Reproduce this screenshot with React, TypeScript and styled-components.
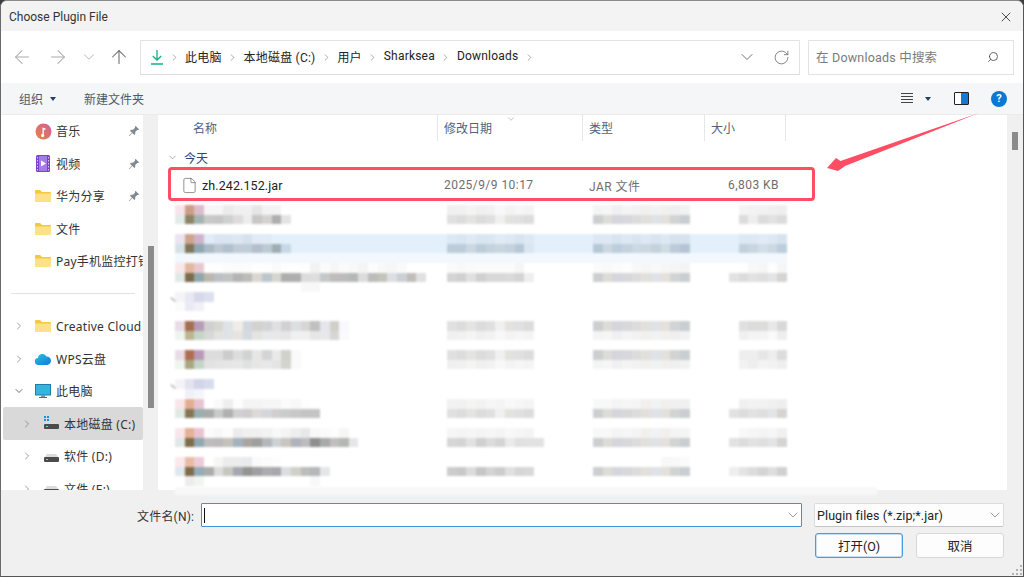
import React from "react";
import styled, { createGlobalStyle } from "styled-components";
import { ArrowLeft, ArrowRight, ArrowUp, ChevronDown, ChevronRight, RotateCw, Search, X, File as FileIcon } from "lucide-react";

const Global = createGlobalStyle`
  html, body { margin: 0; padding: 0; background: #3c3c3c; }
  * { box-sizing: border-box; }
  body { font-family: Roboto, "Noto Sans CJK SC", sans-serif; font-size: 12px; color: #222; }
`;

const Win = styled.div`
  position: relative; width: 1024px; height: 577px; overflow: hidden; display: flex; flex-direction: column;
  background: #fff; border-top: 1px solid #8a8a8a; border-left: 1px solid #6a6a6a; border-right: 1px solid #555;
  border-bottom: 1px solid #555; border-radius: 7px 7px 0 0;
`;
const TitleBar = styled.div`
  height: 30px; flex: none; background: #f3f3f3; display: flex; align-items: center; justify-content: space-between;
  padding: 1px 9px 0 8px; font-size: 12px; color: #333;
`;
const NavBar = styled.div`
  height: 52px; flex: none; background: #fff; display: flex; align-items: center; padding-top: 0;
`;
const NavIcons = styled.div`
  width: 139px; flex: none; position: relative; height: 100%; display: flex; align-items: center;
`;
const NavBtn = styled.span<{ $w: number; $c?: string }>`
  width: ${p => p.$w}px; flex: none; display: flex; justify-content: center; color: ${p => p.$c || "#a9a9a9"};
`;
const AddressBox = styled.div`
  width: 660px; height: 35px; flex: none; border: 1px solid #e3e3e3; border-bottom-color: #dcdcdc; display: flex; align-items: center;
  padding: 0 9px 0 10px; font-size: 12px; color: #222;
`;
const Crumb = styled.span`
  white-space: nowrap; padding-bottom: 2px; letter-spacing: .2px;
`;
const CrumbSep = styled.span`
  display: flex; width: 22px; justify-content: center; color: #666;
`;
const CrumbEnd = styled.div`
  margin-left: auto; display: flex; align-items: center; gap: 16px; color: #666;
`;
const SearchBox = styled.div`
  width: 206px; height: 35px; flex: none; margin-left: 8px; border: 1px solid #e3e3e3; display: flex; align-items: center; justify-content: space-between;
  padding: 0 14px 1px 7px; font-size: 12.5px; color: #7a7a7a; letter-spacing: .2px;
`;
const SearchGlyph = styled.span`
  display: flex; transform: scaleX(-1); color: #555;
`;
const Toolbar = styled.div`
  height: 32px; flex: none; background: #f5f6f7; border-bottom: 1px solid #ebebeb; display: flex; align-items: center;
  padding: 0 16px 0 18px; color: #4a5a70; font-size: 12px;
`;
const ToolButton = styled.span`
  display: flex; align-items: center; gap: 7px;
`;
const Caret = styled.span`
  width: 0; height: 0; border-left: 3.5px solid transparent; border-right: 3.5px solid transparent; border-top: 4px solid #24406a;
`;
const NewFolder = styled.span`
  margin-left: 28px;
`;
const ToolRight = styled.div`
  margin-left: auto; display: flex; align-items: center;
`;
const ViewList = styled.span`
  width: 12px; height: 11px; margin-right: 12px; background: repeating-linear-gradient(#444 0 1px, transparent 1px 3px);
`;
const PaneIcon = styled.span`
  width: 15px; height: 13px; margin-left: 23px; border: 1.5px solid #222; border-radius: 1px;
  background: linear-gradient(90deg, #fff 45%, #1479d6 45%);
`;
const Help = styled.span`
  width: 16px; height: 16px; margin-left: 22px; border-radius: 50%; background: #0a78d6; color: #fff; font-size: 11px; font-weight: 700;
  display: flex; align-items: center; justify-content: center;
`;
const Main = styled.div`
  flex: 1; min-height: 0; display: flex; background: #fff;
`;
const Sidebar = styled.div`
  width: 142px; flex: none; overflow: hidden;
`;
const SideRow = styled.div<{ $level: number; $sel?: boolean }>`
  height: 32.5px; display: flex; align-items: center; font-family: "Noto Sans", "Noto Sans CJK SC", sans-serif; font-size: 12px; letter-spacing: .25px; color: #333; white-space: nowrap; overflow: hidden;
  padding-left: ${p => (p.$level ? 18 : 10) - (p.$sel ? 2 : 0)}px; padding-right: 0;
  margin-left: ${p => (p.$sel ? 2 : 0)}px; background: ${p => (p.$sel ? "#d9d9d9" : "transparent")}; border-radius: 2px;
`;
const Expander = styled.span`
  width: 16px; flex: none; margin-right: 5px; display: flex; justify-content: center; color: #777;
`;
const IconSlot = styled.span`
  width: 22px; flex: none; margin-right: 2px; display: flex; justify-content: center; align-items: center;
`;
const SideLabel = styled.span`
  flex: 1; min-width: 0; overflow: hidden; line-height: 17px; padding-top: 1px;
`;
const PinSlot = styled.span`
  display: flex; margin: 0 3px 0 4px;
`;
const SideDivider = styled.div`
  height: 32.25px; display: flex; align-items: center; padding: 0 8px 0 10px;
  &::after { content: ""; flex: 1; height: 1px; background: #e2e2e2; }
`;
const Track = styled.div<{ $top: number; $w: number }>`
  width: ${p => p.$w}px; flex: none; background: #f0f0f0; padding: ${p => p.$top}px 5px 0;
`;
const Thumb = styled.div<{ $h: number }>`
  width: 6px; height: ${p => p.$h}px; background: #8b8b8b;
`;
const Pane = styled.div`
  flex: 1; min-width: 0; margin-left: 2px; position: relative; z-index: 1;
`;
const Head = styled.div`
  display: flex; height: 26px; color: #4f627c; font-size: 12px; position: relative;
`;
const HeadCell = styled.div<{ $w: number; $pad: number }>`
  width: ${p => p.$w}px; padding-left: ${p => p.$pad}px; padding-top: 4px; border-right: 1px solid #e6e6e6;
`;
const SortMark = styled.span`
  position: absolute; left: 346px; top: -1px; color: #888; display: flex;
`;
const GroupRow = styled.div`
  margin-top: 7px; height: 19px; padding-left: 7px; display: flex; align-items: center; gap: 6px; color: #2e4a78; font-size: 12px;
`;
const Grid = styled.div`
  display: grid; grid-template-columns: 263px 145px 122px 82px; margin-left: 15px; width: 612px;
`;
const FileRow = styled(Grid)`
  margin-top: 4px; height: 28px; align-items: center; color: #6e6e6e; font-size: 12px;
`;
const FileName = styled.div`
  display: flex; align-items: center; gap: 4px; padding-left: 6px; color: #222; font-size: 12.5px; letter-spacing: .1px;
`;
const FileCell = styled.div<{ $right?: boolean }>`
  padding: ${p => (p.$right ? "0 8px 0 0" : "0 0 0 6px")}; text-align: ${p => (p.$right ? "right" : "left")}; letter-spacing: .45px;
`;
const BlurList = styled.div`
  margin-top: 6px; filter: blur(.8px);
`;
const BlurRow = styled(Grid)<{ $hl?: boolean; $h?: number }>`
  height: ${p => p.$h || 29}px; align-items: start;
  background: ${p => (p.$hl ? "linear-gradient(#e3f0fb 19px, #f2f8fe 19px)" : "transparent")};
`;
const BlurGroup = styled(BlurRow)`
  position: relative;
  &::before {
    content: ""; position: absolute; left: -5px; top: 7px; width: 6px; height: 1.2px; background: #8a8a8a; transform: rotate(40deg);
  }
`;
const BlurCol = styled.div<{ $ml?: number; $right?: boolean }>`
  margin-left: ${p => p.$ml || 0}px; display: flex; flex-direction: column; align-items: ${p => (p.$right ? "flex-end" : "flex-start")};
`;
const Line = styled.div`
  display: flex; height: 9.67px;
`;
const Cell = styled.span<{ $c: string }>`
  width: 9.67px; height: 9.67px; flex: none; background: #${p => p.$c};
`;
const Strip = styled.div`
  margin-left: 15px; width: 702px; height: 8px; margin-top: 1px; background: #f8f8f8;
`;
const Foot = styled.div`
  height: 86px; flex: none; background: #f0f0f0; padding: 13px 20px 0 136px; display: grid;
  grid-template-columns: 64px 601px 12px 190px; grid-template-rows: 24px 25px; row-gap: 6px; position: relative;
`;
const FootLabel = styled.label`
  display: flex; align-items: center; color: #333; font-size: 12px; letter-spacing: .2px;
`;
const NameInput = styled.div`
  grid-column: 2; border: 1px solid #3d93dc; background: #fff; display: flex; align-items: center; justify-content: space-between;
  padding: 0 0 0 2px; color: #777; border-radius: 1px;
`;
const Cursor = styled.span`
  width: 1px; height: 15px; background: #111;
`;
const TypeSelect = styled.div`
  grid-column: 4; border: 1px solid #dcdcdc; border-bottom-color: #c4c4c4; background: #fdfdfd; border-radius: 2px; display: flex; align-items: center;
  justify-content: space-between; padding: 0 0 0 2px; color: #222; font-size: 12.5px; letter-spacing: .1px; white-space: nowrap;
`;
const Buttons = styled.div`
  grid-column: 2 / 5; display: flex; justify-content: flex-end; gap: 13px;
`;
const Btn = styled.div<{ $primary?: boolean }>`
  width: 88px; height: 25px; border-radius: 3px; background: #fdfdfd; display: flex; align-items: center; justify-content: center; color: #222; font-size: 12.5px;
  border: 1px solid ${p => (p.$primary ? "#4a9bdc" : "#d8d8d8")};
  box-shadow: ${p => (p.$primary ? "inset 0 0 0 .5px #8cc0ea" : "none")};
`;
const Grip = styled.svg`
  position: absolute; right: 1px; bottom: 1px;
`;
const RedBox = styled.div`
  position: absolute; left: 167px; top: 166px; width: 647px; height: 34px; border: 3px solid #ff4d63; border-radius: 4px; z-index: 3;
`;
const Arrow = styled.svg`
  position: absolute; left: 820px; top: 105px; z-index: 3;
`;

const Folder = () => (
  <svg width="16" height="14" viewBox="0 0 16 14">
    <path d="M0 2a1 1 0 0 1 1-1h4l2 2h8a1 1 0 0 1 1 1v9H0z" fill="#f9c63f" />
    <path d="M0 4.5h16V13H0z" fill="#fde08a" />
  </svg>
);
const Music = () => (
  <svg width="17" height="17" viewBox="0 0 17 17">
    <defs><linearGradient id="mg" x1="0" y1="1" x2="1" y2="0"><stop offset="0" stopColor="#e9853f" /><stop offset="1" stopColor="#c9609b" /></linearGradient></defs>
    <circle cx="8.5" cy="8.5" r="8" fill="url(#mg)" />
    <path d="M7.5 11V4.5l3 1v1.4l-1.7-.5V11.5a1.6 1.6 0 1 1-1.3-.5z" fill="#fff" />
  </svg>
);
const Video = () => (
  <svg width="14" height="17" viewBox="0 0 14 17">
    <rect width="14" height="17" rx="1.5" fill="#7d3fd0" />
    <path d="M3 1h8v15H3z" fill="#a77be6" />
    <path d="M5 5.5l5 3-5 3z" fill="#fff" />
    <path d="M1 2h1v1.5H1zM1 5h1v1.5H1zM1 8h1v1.5H1zM1 11h1v1.5H1zM1 14h1v1.5H1zM12 2h1v1.5h-1zM12 5h1v1.5h-1zM12 8h1v1.5h-1zM12 11h1v1.5h-1zM12 14h1v1.5h-1z" fill="#d7c2f5" />
  </svg>
);
const Cloud = () => (
  <svg width="16" height="12" viewBox="0 0 16 12">
    <defs><linearGradient id="cg" x1="0" y1="0" x2="1" y2="1"><stop offset="0" stopColor="#20c6d8" /><stop offset="1" stopColor="#1478e0" /></linearGradient></defs>
    <path d="M3.5 12A3.5 3.5 0 0 1 3 5a4.5 4.5 0 0 1 8.5-1.5A4.2 4.2 0 0 1 12 12z" fill="url(#cg)" />
  </svg>
);
const Monitor = () => (
  <svg width="16" height="15" viewBox="0 0 16 15">
    <rect x=".5" y=".5" width="15" height="10.5" fill="#35b5dc" stroke="#1f7ea6" />
    <path d="M6 11h4v2H6z" fill="#7d97a8" /><path d="M4 13h8v1H4z" fill="#51707f" />
  </svg>
);
const Drive = ({ win }: { win?: boolean }) => (
  <svg width="16" height="15" viewBox="0 0 16 15">
    {win && <path d="M1 0h2v2H1zM4 0h2v2H4zM1 3h2v2H1zM4 3h2v2H4z" fill="#1c90e0" />}
    <path d="M2 8l2-3h9l2 3z" fill="#dcdcdc" />
    <rect x="1" y="8" width="15" height="5" rx="1" fill="#4c4c4c" />
    <path d="M3 10h2v1H3z" fill="#6fe08a" />
  </svg>
);
const Pin = () => (
  <svg width="12" height="12" viewBox="0 0 12 12">
    <path d="M7.5.8l3.7 3.7-1.2.6-.8-.1-2 2 .1 2-1 1-2-2L1.6 11 1 10.4l3-2.7-2-2 1-1 2 .1 2-2-.1-.8z" fill="#808a94" />
  </svg>
);
const Chev = () => <ChevronRight size={12} strokeWidth={1.4} />;
const ChevD = () => <ChevronDown size={12} strokeWidth={1.4} color="#333" />;

const side = [
  { icon: <Music />, label: "音乐", pin: true, level: 0 },
  { icon: <Video />, label: "视频", pin: true, level: 0 },
  { icon: <Folder />, label: "华为分享", pin: true, level: 0 },
  { icon: <Folder />, label: "文件", level: 0 },
  { icon: <Folder />, label: "Pay手机监控打钱", level: 0 },
  null,
  { icon: <Folder />, label: "Creative Cloud", exp: <Chev />, level: 0 },
  { icon: <Cloud />, label: "WPS云盘", exp: <Chev />, level: 0 },
  { icon: <Monitor />, label: "此电脑", exp: <ChevD />, level: 0 },
  { icon: <Drive win />, label: "本地磁盘 (C:)", exp: <Chev />, level: 1, sel: true },
  { icon: <Drive />, label: "软件 (D:)", exp: <Chev />, level: 1 },
  { icon: <Drive />, label: "文件 (E:)", exp: <Chev />, level: 1 },
];

const parse = (s: string) => s.split(" ").filter(Boolean);
const dateD = "e0e0e0 dcdcdc e4e4e2 dcdcdf e0e0e0 f0f0f0 e4e2de e0e0e2 dcdcdc";
const dateL = "f0f0f0 f1f1f1 f4f4f4 f0f0f0 f2f2f2 f8f8f8 f3f3f3 f6f6f6 f4f4f4";
const typeD = "ccced0 dedcd8 d4d6dc d8d8dc dcdcdc e2e0dc dfe2e6 e4e0dc d2d4d4 c8ced2";
const typeL = "f4f4f4 f6f6f6 f0f0f2 f4f4f4 f2f2f2 f2f0ee f0f2f4 f2f0ee efefef f2f2f2";
const sizeD = "dcdcdc eeeeee dcdcdf e2e2e2 dcdcda";
const sizeDL = "e2e2e2 dcdcdc e4e2e0 dfdfdf e2e4e6 d6d4d2";

type Rd = { name: string[]; date: string[]; type: string[]; size: string[]; hl?: boolean };
const rows1: Rd[] = [
  {
    name: ["f6e4ea cc9e85 dcbccc f6f6f6 f6f6f6 ebebeb f0f0f0 f0f0f0 e6e6e6 f3f3f3 f3f3f3", "e1ebe8 8c8466 a3b5b2 c8c8c8 c6c6c6 cfd0d0 dedcda ecedec c8c6c6 d4d2d0 aeaeae e2e4e4"],
    date: [dateL, dateD], type: [typeL, typeD], size: ["f4f4f4 f2f2f2 f2f2f2 f0f0f0 eeeeee", sizeD],
  },
  {
    hl: true,
    name: ["ebe4f0 cda48c cfb3cb e0ecf8 d9e5f1 d9e6f2 dce7f2 d5e1ed e0ebf6 e0ebf6", "d4e2e6 807558 8ea7b0 acbac6 bec8d2 b1c0cd c0ccd6 bfcdd8 b4becc bccad2 9eaeb4 c8d8e6"],
    date: ["dce8f4 d8e6f2 dee9f4 d8e6f2 dae6f2 e0ebf6 dce8f4 d8e4f0 dce8f4", "bccdd9 bccdd9 cbd8e2 bccdd9 c4d2de c8d6e0 c4d2de b6c8d6 d8e6f2"],
    type: ["dce8f4 dce8f4 d8e4f0 dce8f4 d8e4f0 dce8f4 d8e4f0 dce8f4 d6e2ee d6e2ee", "b6c8d6 ccd8e0 bccddc c4d2de ccd8e2 ccd8e0 c4d2de d0dce4 bccbd8 b4c4d4"],
    size: ["dce8f4 dce8f4 e0ebf6 dce8f4 d6e2ee", "c0d0dc c8d6e0 d2dee8 ccd8e2 bccddc"],
  },
  {
    name: ["f8e8ea e2b89e e8c8d0 fefefe fefefe fcfcfc fbfbfb fcfcfc fefefe fefefe fafafa fefefe fefefe fefefe f2f2f2 fbfbfb f6f6f6 fafafa f8f8f8 f4f4f4 fcfcfc f8f8f8 f6f6f6 fafafa", "e0e9e6 7c6a4c 90a8ac bbb6ae bcc0c4 c0c4c0 b4b4b4 bcbcba dcd6d0 bcc6cc d6d6d0 aeaeae aeaeae dcdcdc dedede c4c8c8 c0bcbc bcbcbc b4b8b8 dcdcdc bcbcbc c4c4bc dcdee2 ccd0d4 c0bcb8 e0e0e0", "ffffff ffffff ffffff ffffff ffffff ffffff ffffff ffffff ffffff ffffff ffffff ffffff ffffff f8f8f8 f8f8f8"],
    date: ["fafafa f8f8f8 fafafa fbfbfb fbfbfb fbfbfb fbfbfb f6f6f6", "d4d4d4 d0d0d0 e0e0e0 d0d0d2 d8d8d8 d8d8d8 dadada d4d4d4 eeeeee"],
    type: ["fbfbfb f9f9f9 fbfbfb fdfdfd f8f8f8 f6f6f6 f9f9f9 f6f6f6 f5f5f5 f4f4f4", typeD],
    size: ["fefefe f8f8f8 f6f6f6 fefefe f6f6f6", sizeDL],
  },
];
const head2 = ["f4f4f6 e8e8f2 d8d8ea dcdfef", "fbfbfb eaeaf4 f0f0f8 ffffff"];
const rows2: Rd[] = [
  {
    name: ["e8dce6 a56e50 b79cb8 d0d0d0 d6d6d2 dfe2e6 f0ede8 d2d8de d2d2ce d2d4d6 e0e0e0 d2d0d2 dcdfdf d6d6d4 c0c0c0 e4e6ec d0cfc8 f8f9fd", "eef4ee bbb592 c4d6c8 d8d8d8 e2e2e0 dfe2e6 e6e4e0 d4dade e4e4e2 e6e8ea e8e8ea e6e6e6 f0f0f0 f0f0f0 e6e6e6 e8e8ea d6d6d4 fafafd"],
    date: [dateD, dateL], type: [typeD, typeL], size: ["e0e0e0 dcdcdc dcdcda e8e8e8 d8d8d8", "f0f0f0 f4f4f4 f4f4f4 fafafa eeeeee"],
  },
  {
    name: ["e8dce6 b06e50 b998b8 dcdcdc dcdcdc cccccc dddddd d2d2d2 e6e6e6 d2d4d6 e8eaea d0d0cc fafafa", "eef4ee aaa682 c4d6c8 e2e2e2 e4e4e4 e6e6e6 e6e8e8 e0e2e2 e8e6e4 e6e8ea e4e4e4 d4d4ce fafafa"],
    date: [dateD, dateL], type: [typeD, typeL], size: ["eeeeee eeeeee e6e6e6 eeeeee dcdcdc", "f2f2f2 eeeeee f4f4f4 f2f2f2 eeeeee"],
  },
];
const head3 = ["f4f4f6 e2e2f0 d2d4e8 d6dbee", "ffffff f0f0f8 f4f4fa ffffff"];
const rows3: Rd[] = [
  {
    name: ["f8e6ea e2ae92 e8c4d0 ffffff fafafa eeeeee fdfdfd f4f4f4 f4f4f4 f6f6f6 f6f6f6 fbfbfb f8f8f8 fdfdfd", "e0e9e6 857555 98b0b0 aaaaaa c8caca b0b0b0 d0d0d0 ceccce dcdad6 d4d6dc d0cece c8cccc c8c8c8 c4c4c4 c4c4c4"],
    date: ["f2f2f2 f1f1f1 f4f4f4 f2f2f2 f6f6f6 f4f4f4 f8f8f8 f6f6f6 f4f4f4", dateD], type: ["f8f8f8 f8f8f8 f4f4f4 f6f6f6 f4f4f4 f2f0ee f0f2f4 f2f0ee f0f0f0 f0f0f0", typeD], size: ["f0f0f0 f2f2f2 f2f2f2 f0f0f0 eeeeee", sizeDL],
  },
  {
    name: ["f8e6ea e4b096 e8c4d0 fbfbfb f8f8f8 fcfcfa ececee f0f0f0 f0f0f0 f2f2f2 f8f8f8 f4f4f4 eeeeee e8e8e8 f8f8f8 fbfbfb fdfdfd f6f6f6", "dfe8e8 7f6b4a 8fa8b2 bebcbc bcbabc c4c2ba a4b2be a8a4a0 9e9e9c b4b8bc ccd2d4 c8c4be b0b2bc bcbcc0 8e8e8e a8aaa8 c0bebe b4b8b4 e4e6ea"],
    date: ["f6f6f6 f4f4f4 f6f6f6 f4f4f4 f6f6f6 f4f4f4 f8f8f8 f6f6f6 f4f4f4", "d6d6d8 d4d4d4 e2e2e2 d0d0d2 dcdcdc d4d4d4 eaeaea e0e0e0 e2e2e2 e2e2e2"],
    type: ["f8f8f8 f8f8f8 f4f4f4 f6f6f6 f4f4f4 f2f0ee f0f2f4 f2f0ee f4f4f4 f4f4f4", typeD], size: ["f8f8f8 f6f6f6 f4f4f4 f6f6f6 f0f0f0", sizeDL],
  },
  {
    name: ["fae8ec e8bca4 ecccd8 ffffff f6f6f4 ececec ececec e8eaec fafafa fbfbfb fdfdfd", "dfe8ec 7f6b4a 94acb8 acacaa dcdcdc c6c8c0 a4a8ae 949490 a0a0a4 acacae a8a8ac dcdde0 d0cfc8 bcbcbc b4b8b8 e4e6ea", "ffffff ececea f2f4f0 ffffff ffffff ffffff ffffff ffffff ffffff ffffff ffffff ffffff ffffff ffffff f8f8f8"],
    date: ["ffffff ffffff ffffff", "cccccc c8c8c8 dcdcdc c6c6c8 d4d4d4 cccccc e0e0e0 d6d6d6 d8d8d8"],
    type: ["ffffff ffffff ffffff ffffff ffffff ffffff ffffff f8f8f8 f8f8f8 fbfbfb", typeD], size: ["ffffff ffffff ffffff", "eeeeee e4e4e4 dcdcdc d4d4d4 dedede d0d0d0"],
  },
];

const Mosaic = ({ lines, right, ml }: { lines: string[]; right?: boolean; ml?: number }) => (
  <BlurCol $right={right} $ml={ml}>
    {lines.map((l, i) => (
      <Line key={i}>{parse(l).map((c, j) => <Cell key={j} $c={c} />)}</Line>
    ))}
  </BlurCol>
);
const BlurFile = ({ r }: { r: Rd }) => (
  <BlurRow $hl={r.hl}>
    <Mosaic lines={r.name} />
    <Mosaic lines={r.date} ml={9} />
    <Mosaic lines={r.type} ml={10} />
    <Mosaic lines={r.size} right />
  </BlurRow>
);
const Sep = () => <CrumbSep><ChevronRight size={11} strokeWidth={1.2} /></CrumbSep>;

export default function App() {
  return (
    <Win>
      <Global />
      <TitleBar>
        <span>Choose Plugin File</span>
        <X size={16} strokeWidth={1.2} color="#222" />
      </TitleBar>
      <NavBar>
        <NavIcons>
          <NavBtn $w={42}><ArrowLeft size={22} strokeWidth={1.1} /></NavBtn>
          <NavBtn $w={30}><ArrowRight size={22} strokeWidth={1.1} /></NavBtn>
          <NavBtn $w={32}><ChevronDown size={18} strokeWidth={1.1} /></NavBtn>
          <NavBtn $w={28} $c="#666"><ArrowUp size={22} strokeWidth={1.1} /></NavBtn>
        </NavIcons>
        <AddressBox>
          <svg width="12" height="16" viewBox="0 0 12 16" fill="none" stroke="#16ad88" strokeWidth="1.3">
            <path d="M6 1v10M1.8 7L6 11l4.2-4M0 15h12" />
          </svg>
          <Sep />
          <Crumb>此电脑</Crumb>
          <Sep />
          <Crumb>本地磁盘 (C:)</Crumb>
          <Sep />
          <Crumb>用户</Crumb>
          <Sep />
          <Crumb>Sharksea</Crumb>
          <Sep />
          <Crumb>Downloads</Crumb>
          <Sep />
          <CrumbEnd>
            <ChevronDown size={20} strokeWidth={1.1} />
            <RotateCw size={17} strokeWidth={1.1} />
          </CrumbEnd>
        </AddressBox>
        <SearchBox>
          <span>在 Downloads 中搜索</span>
          <SearchGlyph><Search size={12} strokeWidth={1.8} /></SearchGlyph>
        </SearchBox>
      </NavBar>
      <Toolbar>
        <ToolButton>组织 <Caret /></ToolButton>
        <NewFolder>新建文件夹</NewFolder>
        <ToolRight>
          <ViewList />
          <Caret />
          <PaneIcon />
          <Help>?</Help>
        </ToolRight>
      </Toolbar>
      <Main>
        <Sidebar>
          {side.map((s, i) =>
            s ? (
              <SideRow key={i} $level={s.level} $sel={s.sel}>
                <Expander>{s.exp}</Expander>
                <IconSlot>{s.icon}</IconSlot>
                <SideLabel>{s.label}</SideLabel>
                {s.pin && <PinSlot><Pin /></PinSlot>}
              </SideRow>
            ) : (
              <SideDivider key={i} />
            )
          )}
        </Sidebar>
        <Track $top={131} $w={15}><Thumb $h={162} /></Track>
        <Pane>
          <Head>
            <HeadCell $w={278} $pad={33}>名称</HeadCell>
            <HeadCell $w={145} $pad={6}>修改日期</HeadCell>
            <HeadCell $w={122} $pad={6}>类型</HeadCell>
            <HeadCell $w={81} $pad={6}>大小</HeadCell>
            <SortMark><ChevronDown size={10} strokeWidth={1.2} /></SortMark>
          </Head>
          <GroupRow><ChevronDown size={11} strokeWidth={1.3} color="#777" />今天</GroupRow>
          <FileRow>
            <FileName><FileIcon size={17} strokeWidth={1} color="#666" />zh.242.152.jar</FileName>
            <FileCell>2025/9/9 10:17</FileCell>
            <FileCell>JAR 文件</FileCell>
            <FileCell $right>6,803 KB</FileCell>
          </FileRow>
          <BlurList>
            {rows1.map((r, i) => <BlurFile key={i} r={r} />)}
            <BlurGroup><Mosaic lines={head2} /></BlurGroup>
            {rows2.map((r, i) => <BlurFile key={i} r={r} />)}
            <BlurGroup $h={20}><Mosaic lines={head3} /></BlurGroup>
            {rows3.map((r, i) => <BlurFile key={i} r={r} />)}
            <Strip />
          </BlurList>
        </Pane>
        <Track $top={17} $w={16}><Thumb $h={18} /></Track>
      </Main>
      <Foot>
        <FootLabel>文件名(N):</FootLabel>
        <NameInput><Cursor /><ChevronDown size={16} strokeWidth={1.1} /></NameInput>
        <TypeSelect>Plugin files (*.zip;*.jar)<ChevronDown size={16} strokeWidth={1.1} color="#777" /></TypeSelect>
        <Buttons>
          <Btn $primary>打开(O)</Btn>
          <Btn>取消</Btn>
        </Buttons>
        <Grip width="10" height="10" viewBox="0 0 10 10" fill="#b0b0b0">
          <path d="M8 0h2v2H8zM4 4h2v2H4zM8 4h2v2H8zM0 8h2v2H0zM4 8h2v2H4zM8 8h2v2H8z" />
        </Grip>
      </Foot>
      <RedBox />
      <Arrow width="170" height="72" viewBox="0 0 170 72">
        <path d="M6 62 L15 52 L19.5 55 L158 7 L24 60 L17 65 Z" fill="#ff4d63" />
      </Arrow>
    </Win>
  );
}
